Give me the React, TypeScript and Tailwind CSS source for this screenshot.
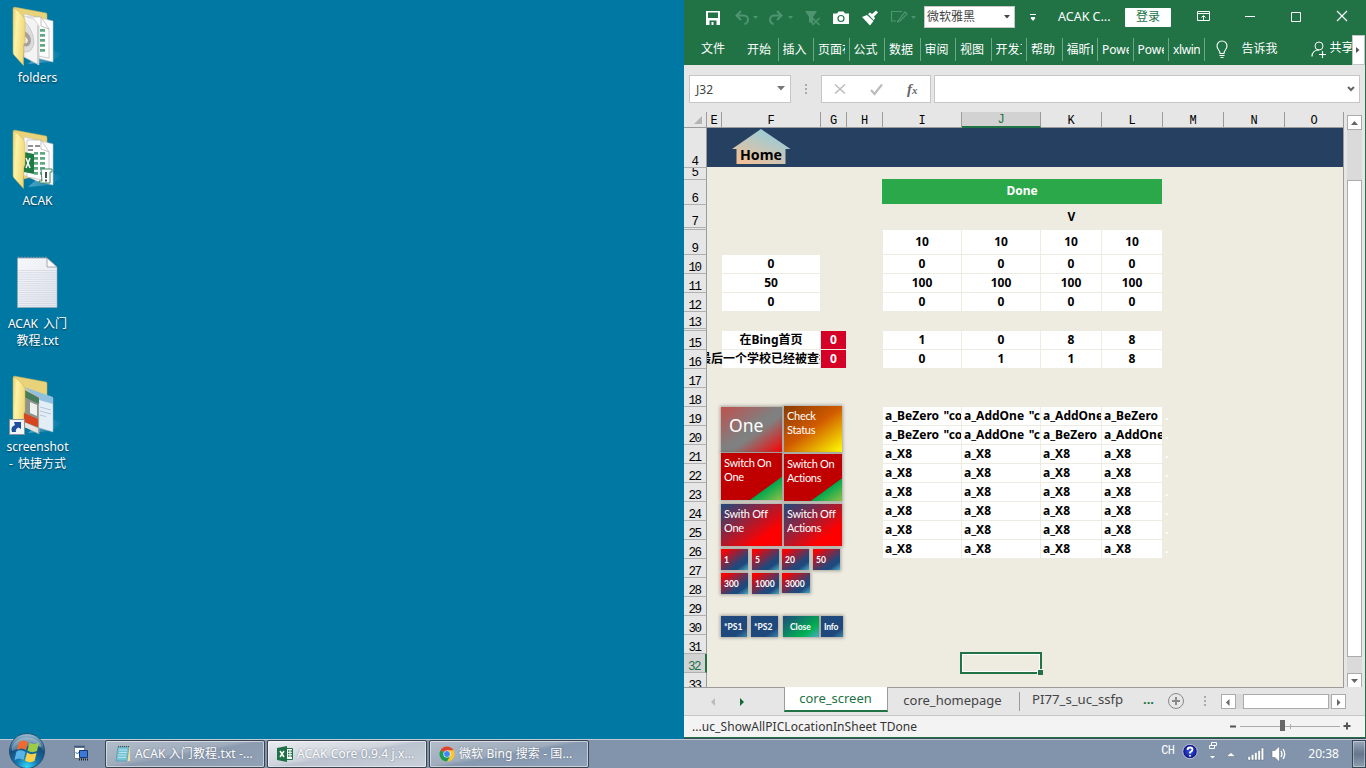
import type { ReactNode } from 'react';

const UI = "font-['Noto_Sans','Noto_Sans_CJK_SC',sans-serif]";

/* ---------- desktop ---------- */

function FolderIcon({ kind }: { kind: 'disc' | 'excel' | 'shot' }) {
  return (
    <svg width="64" height="67" viewBox="0 0 64 67">
      <defs>
        <linearGradient id={`ff-${kind}`} x1="0" y1="0" x2="1" y2="0.3">
          <stop offset="0" stopColor="#e9cd68" />
          <stop offset="0.35" stopColor="#fdf3a8" />
          <stop offset="1" stopColor="#f0d878" />
        </linearGradient>
        <linearGradient id={`fs-${kind}`} x1="0" y1="0" x2="1" y2="0">
          <stop offset="0" stopColor="#bfe2f2" stopOpacity="0.6" />
          <stop offset="1" stopColor="#bfe2f2" stopOpacity="0" />
        </linearGradient>
      </defs>
      <path d="M46 48 L63 54 L50 62 L28 64 Z" fill={`url(#fs-${kind})`} opacity=".7" />
      <path d="M14 7 L46 13 Q47 13 47 15 V50 L24 56 Z" fill="#e8d27a" stroke="#c9b25a" strokeWidth=".5" />
      {kind === 'shot' ? (
        <>
          <path d="M24 22 L53 29 V63 L36 58 Z" fill="#e3edf6" stroke="#9fb2c0" strokeWidth=".5" />
          <path d="M24 18 L53 28 V35 L39 31 Z" fill="#8fc0dd" />
          <path d="M40 38 L51 41 M40 42 L51 45 M40 46 L46 47.500" stroke="#b3c6d6" />
          <path d="M24 20 L39 28 V65 L24 57 Z" fill="#8c948c" stroke="#d4d4d4" strokeWidth=".5" />
          <path d="M24 21 L39 29 V35 L24 28 Z" fill="#477d5b" />
          <path d="M30 33 L37 36 V47 L30 44 Z" fill="#eef0ee" />
          <path d="M24 44 L38 50 V58 L24 53 Z" fill="#d54620" />
          <path d="M24 53 L38 59 V64 L24 58 Z" fill="#e5e2df" />
        </>
      ) : (
        <>
          <path d="M24 14 L53 21 V62 L37 58 L24 52 Z" fill="#fbfbfb" stroke="#c5c5c5" strokeWidth=".6" />
          <path d="M27 17 L41 17 L49 29 V58 L27 54 Z" fill="#fff" stroke="#a9a9a9" strokeWidth=".6" />
          <path d="M41 17 V26 L49 29" fill="none" stroke="#9a9a9a" strokeWidth=".6" />
          <path
            d="M40 29h5v2.800h-5zM40 34h5v2.800h-5zM40 39h5v2.800h-5zM40 44h5v2.800h-5zM40 49h5v2.800h-5zM34 29h4v2.800h-4zM34 34h4v2.800h-4zM34 39h4v2.800h-4zM34 44h4v2.800h-4zM34 49h4v2.800h-4z"
            fill="#5faa83"
          />
        </>
      )}
      {kind === 'disc' && (
        <>
          <path d="M24 16 L34 19 L39 26 V65 L24 57 Z" fill="#f3f3f3" stroke="#bdbdbd" strokeWidth=".6" />
          <path d="M24 21 Q33 29 34 42 Q33 53 24 52 Z" fill="#dcdcdc" stroke="#b5b5b5" strokeWidth=".6" />
          <path d="M24 31 Q31 34 31 41 Q30 48 24 46 Z" fill="#a8a19b" />
          <path d="M24 36 Q28 38 28 41 Q27 44 24 43 Z" fill="#e9e9e9" />
          <path d="M37 25 L39 26 V65 L37 64 Z" fill="#cfcfcf" />
        </>
      )}
      {kind === 'excel' && (
        <>
          <path d="M28 22h5v2h-5zM35 22h5v2h-5zM28 26h5v2h-5z" fill="#8e9291" />
          <path d="M24 29 L34 31 V51 L24 49 Z" fill="#1e7a45" />
          <path d="M26 35 L30 45 M30 35 L26 45" stroke="#fff" strokeWidth="1.500" />
          <path d="M41 46 H52 V49 H50 V60 H40 L39 58 H42 Z" fill="#fff" stroke="#3f8a63" strokeWidth="1" />
          <path d="M46 49 V55 M46 56.500 V58.500" stroke="#2f3f38" strokeWidth="1.800" />
        </>
      )}
      <path d="M13.500 7.500 Q23 14 25 20 V42 L23.500 45 V65.500 L14 55 Q13 54 13 52 V9 Z" fill={`url(#ff-${kind})`} stroke="#cfb557" strokeWidth=".5" />
      {kind === 'shot' && (
        <g>
          <rect x="9.500" y="50.500" width="15" height="15" fill="#f2f4f6" stroke="#8b949c" />
          <path d="M12 63 Q10 58 15 56 L14 53 L21 53 L21 60 L18.500 58.500 Q15 60 16 63 Z" fill="#1d4f9c" />
        </g>
      )}
    </svg>
  );
}

function NoteIcon() {
  return (
    <svg width="64" height="64" viewBox="0 0 64 64">
      <defs>
        <linearGradient id="note" x1="0" y1="0" x2="1" y2="1">
          <stop offset="0" stopColor="#f6f7fa" />
          <stop offset="1" stopColor="#e3e6f0" />
        </linearGradient>
      </defs>
      <path d="M17.500 12 H47 L57 21 V61.500 H17.500 Z" fill="url(#note)" stroke="#9ba5af" strokeWidth=".6" />
      {Array.from({ length: 17 }, (_, i) => (
        <path key={i} d={`M18 ${24.5 + i * 2.2} H56.500`} stroke="#c9ced8" strokeWidth=".6" />
      ))}
      <path d="M18 11.500 H47" stroke="#8796a3" strokeWidth="1.500" strokeDasharray="1.500 1.500" />
      <path d="M47 12 V21 H57 Z" fill="#fafafa" stroke="#8f969e" strokeWidth=".8" />
    </svg>
  );
}

function DesktopItem({ icon, label }: { icon: ReactNode; label: string[] }) {
  return (
    <div className="flex h-[123px] w-[75px] flex-col">
      <div className="flex h-[69px] items-start">{icon}</div>
      <div className="flex flex-col items-center text-[12px] leading-[17px] text-white [text-shadow:0_1px_2px_rgba(0,0,0,.55)]">
        {label.map((l) => (
          <span key={l} className="whitespace-pre [word-spacing:2px]">{l}</span>
        ))}
      </div>
    </div>
  );
}

/* ---------- title bar ---------- */

function QuickIcons() {
  return (
    <svg width="224" height="34" viewBox="0 0 224 34" className="shrink-0" fill="none">
      <path d="M6 11h14v14H6z" fill="#fff" />
      <path d="M8 12.500h10v5.500H8zM9.500 20.500h7v4.500H9.500z" fill="#217346" />
      <path d="M11.500 22h2v3h-2z" fill="#fff" />
      <g stroke="#4f9470" strokeWidth="2">
        <path d="M41 11 L36.500 15.500 L41 20 M37 15.500 H44 Q48 16 48 20 Q48 23 44.500 24" />
        <path d="M77 11 L81.500 15.500 L77 20 M81 15.500 H74 Q70 16 70 20 Q70 23 73.500 24" />
      </g>
      <path d="M53 16h5l-2.500 3zM88 16h5l-2.500 3z" fill="#4f9470" />
      <path d="M105 11h12l-4 6v7l-4-2v-5z" fill="#4f9470" />
      <path d="M112.500 18l7 7M119.500 18l-7 7" stroke="#4f9470" strokeWidth="1.500" />
      <path d="M133 13.500h4l1.500-2h5l1.500 2h4V24h-16z" fill="#fff" />
      <circle cx="141" cy="18.500" r="3" stroke="#217346" strokeWidth="1.200" />
      <path d="M162 17l5-2 6.500 6-3.500 4.500zM168 14l2-1.500 2 1.500 4-3.500 2 2-4 4 1 2-1.500 1.500z" fill="#fff" />
      <path d="M202 11.500H191.500v9.500H196M198 21L205 12l2 2-7 7-3 1z" stroke="#4f9470" strokeWidth="1.200" />
      <path d="M211 16h5l-2.500 3z" fill="#4f9470" />
    </svg>
  );
}

function TitleBar() {
  return (
    <div className="flex h-[34px] items-center text-[12px] text-white">
      <div className="flex w-[240px] pl-4"><QuickIcons /></div>
      <div className="flex h-[22px] w-[91px] items-center justify-between border border-[#c6c6c6] bg-white pl-[2px] pr-[4px] text-[#444]">
        <span>微软雅黑</span>
        <svg width="6" height="4"><path d="M0 0h6L3 3.500z" fill="#444" /></svg>
      </div>
      <svg width="8" height="10" className="ml-[14px]"><path d="M1 2.500h6M2 5.500h4" stroke="#fff" /><path d="M1.500 6h5L4 9z" fill="#fff" /></svg>
      <span className="ml-[21px] w-[67px] text-[12.500px]">ACAK C...</span>
      <div className="flex h-[19px] w-[46px] items-center justify-center rounded-[1px] bg-white text-[#217346]">登录</div>
      <svg width="195" height="34" viewBox="0 0 195 34" fill="none" stroke="#fff">
        <path d="M26.500 11.500h12v9h-12zM26.500 13.500h12M32.500 20v-4M30.500 17.500l2-2 2 2" />
        <path d="M74 16.500h10M120.500 12.500h9v9h-9z" />
        <path d="M166 11l10 10M176 11l-10 10" strokeWidth="1.200" />
      </svg>
    </div>
  );
}

const ribbonTabs = ['开始', '插入', '页面布', '公式', '数据', '审阅', '视图', '开发工', '帮助', '福昕P', 'Power', 'Power', 'xlwin'];

function Ribbon() {
  return (
    <div className="flex h-[31px] items-start text-[12px] text-white">
      <div className="flex h-[30px] w-[59px] items-center pl-[17px]">文件</div>
      {ribbonTabs.map((t, i) => (
        <div key={i} className="mt-[4px] flex h-[23px] w-[35.500px] shrink-0 items-center border-r border-[#6fa587] pl-[4px] pr-[4px]">
          <span className={`overflow-hidden whitespace-nowrap ${t === 'xlwin' ? 'tracking-[-0.400px]' : ''}`}>{t}</span>
        </div>
      ))}
      <svg width="36" height="30" viewBox="0 0 36 30" fill="none" stroke="#fff">
        <path d="M15 19.500C15 16 12 15.500 12 12a5 5 0 0 1 10 0C22 15.500 19 16 19 19.500zM14.500 21.500h5M15.500 23.500h3" strokeWidth="1.100" />
      </svg>
      <div className="flex h-[30px] w-[69px] items-center pl-px">告诉我</div>
      <svg width="20" height="30" viewBox="0 0 20 30" fill="none" stroke="#fff">
        <circle cx="9" cy="12" r="4" /><path d="M2 22.500c0-4 3-6.500 7-6.500M9 20.500h7M12.500 17v7" strokeWidth="1.200" />
      </svg>
      <div className="flex h-[28px] w-[22px] items-center overflow-hidden whitespace-nowrap">共享</div>
      <div className="mt-px flex h-[30px] w-[13px] shrink-0 items-center justify-center border border-[#c6c6c6] bg-white">
        <svg width="4" height="6"><path d="M0 0l3.500 3L0 6z" fill="#555" /></svg>
      </div>
    </div>
  );
}

function Dots({ c }: { c: string }) {
  return (
    <div className={`flex flex-col items-center justify-center gap-[2px] ${c}`}>
      <i className="size-[2px] bg-[#aaa]" />
      <i className="size-[2px] bg-[#aaa]" />
      <i className="size-[2px] bg-[#aaa]" />
    </div>
  );
}

function FormulaBar() {
  return (
    <div className="flex h-[47px] items-start bg-[#e6e6e6] pl-[5px] pt-[10px] text-[12px] text-[#444]">
      <div className="flex h-[28px] w-[102px] items-center justify-between border border-[#c6c6c6] bg-white pl-[6px] pr-[5px]">
        <span className="pt-px">J32</span>
        <svg width="8" height="6"><path d="M0 0h8L4 4.500z" fill="#777" /></svg>
      </div>
      <Dots c="h-[28px] w-[30px]" />
      <div className="flex h-[28px] w-[110px] items-center border border-[#c6c6c6] bg-white">
        <svg width="78" height="26" viewBox="0 0 78 26" fill="none" stroke="#bcbcbc" strokeWidth="1.600">
          <path d="M13 8.500l10 9M23 8.500l-10 9" /><path d="M49 14l3.500 4L60 8.500" strokeWidth="2.200" />
        </svg>
        <span className="ml-[7px] font-['Liberation_Serif',serif] text-[15px] font-bold italic leading-none text-[#666]">f<span className="text-[11px]">x</span></span>
      </div>
      <div className="ml-[3px] flex h-[28px] w-[426px] items-center justify-end border border-[#c6c6c6] bg-white pr-[4px]">
        <svg width="8" height="6" fill="none" stroke="#666" strokeWidth="2"><path d="M1 1l3 3 3-3" /></svg>
      </div>
    </div>
  );
}

/* ---------- sheet ---------- */

const columns: [string, string][] = [
  ['E', 'w-[15px]'], ['F', 'w-[99px]'], ['G', 'w-[26px]'], ['H', 'w-[36px]'], ['I', 'w-[79px]'], ['J', 'w-[79px]'],
  ['K', 'w-[61px]'], ['L', 'w-[61px]'], ['M', 'w-[61px]'], ['N', 'w-[61px]'], ['O', 'w-[59px]'],
];

function ColumnHeaders() {
  return (
    <div className="flex h-[16px] bg-[#e6e6e6] font-['Liberation_Mono',monospace] text-[12px] text-black">
      <div className="flex w-[23px] items-end justify-end border-b border-r border-[#9b9b9b] pb-[3px] pr-[4px]">
        <svg width="8" height="8"><path d="M8 0v8H0z" fill="#b4b4b4" /></svg>
      </div>
      {columns.map(([c, w]) => (
        <div
          key={c}
          className={`${w} flex items-end justify-center border-r leading-[11px] ${
            c === 'J' ? 'border-b-2 border-b-[#217346] border-r-[#9b9b9b] bg-[#d2d2d2] text-[#217346]' : 'border-b border-[#9b9b9b]'
          }`}
        >
          {c}
        </div>
      ))}
    </div>
  );
}

type RowSpec = { n: string; h: string; f?: string; g?: string; v?: string[]; left?: boolean };
const X8 = ['a_X8', 'a_X8', 'a_X8', 'a_X8'];
const rows: RowSpec[] = [
  { n: '4', h: 'h-[40px]' },
  { n: '5', h: 'h-[12px]' },
  { n: '6', h: 'h-[25px]' },
  { n: '7', h: 'h-[23px]' },
  { n: '', h: 'h-[2px]' },
  { n: '9', h: 'h-[25px]', v: ['10', '10', '10', '10'] },
  { n: '10', h: 'h-[19px]', f: '0', v: ['0', '0', '0', '0'] },
  { n: '11', h: 'h-[19px]', f: '50', v: ['100', '100', '100', '100'] },
  { n: '12', h: 'h-[19px]', f: '0', v: ['0', '0', '0', '0'] },
  { n: '13', h: 'h-[17px]' },
  { n: '', h: 'h-[2px]' },
  { n: '15', h: 'h-[19px]', f: '在Bing首页', g: '0', v: ['1', '0', '8', '8'] },
  { n: '16', h: 'h-[19px]', f: '最后一个学校已经被查找过', g: '0', v: ['0', '1', '1', '8'] },
  { n: '17', h: 'h-[19px]' },
  { n: '18', h: 'h-[19px]' },
  { n: '19', h: 'h-[19px]', left: true, v: ['a_BeZero "co', 'a_AddOne "c', 'a_AddOne', 'a_BeZero'] },
  { n: '20', h: 'h-[19px]', left: true, v: ['a_BeZero "co', 'a_AddOne "c', 'a_BeZero', 'a_AddOne'] },
  { n: '21', h: 'h-[19px]', left: true, v: X8 },
  { n: '22', h: 'h-[19px]', left: true, v: X8 },
  { n: '23', h: 'h-[19px]', left: true, v: X8 },
  { n: '24', h: 'h-[19px]', left: true, v: X8 },
  { n: '25', h: 'h-[19px]', left: true, v: X8 },
  { n: '26', h: 'h-[19px]', left: true, v: X8 },
  { n: '27', h: 'h-[19px]' },
  { n: '28', h: 'h-[19px]' },
  { n: '29', h: 'h-[19px]' },
  { n: '30', h: 'h-[19px]' },
  { n: '31', h: 'h-[19px]' },
  { n: '32', h: 'h-[19px]' },
  { n: '33', h: 'h-[19px]' },
];

const valueWidths = ['w-[79px]', 'w-[79px]', 'w-[61px]', 'w-[61px]'];

function Row({ n, h, f, g, v, left }: RowSpec) {
  const cell = 'flex shrink-0 items-center overflow-hidden border-b border-r border-[#eeece0] whitespace-nowrap';
  return (
    <div className={`${h} flex shrink-0`}>
      <div
        className={`flex w-[23px] shrink-0 items-end justify-center overflow-hidden border-b border-b-[#b0b0b0] pr-px font-['Liberation_Mono',monospace] text-[12.500px] font-normal tracking-[-1.500px] ${
          n === '5' ? 'leading-[11px]' : 'leading-[10px]'
        } ${
          n === '32' ? 'border-r-2 border-r-[#217346] bg-[#d2d2d2] text-[#217346]' : 'border-r border-r-[#9b9b9b] bg-[#e6e6e6] text-black'
        }`}
      >
        {n}
      </div>
      {n === '4' ? (
        <div className="mb-px w-[636px] bg-[#254061]" />
      ) : n === '6' ? (
        <div className="-mt-px mb-px ml-[175px] flex w-[280px] items-center justify-center bg-[#2ba84a] pb-[2px] text-white">Done</div>
      ) : n === '7' ? (
        <div className="ml-[334px] flex w-[61px] items-center justify-center">V</div>
      ) : (
        <>
          <div className="w-[15px] shrink-0" />
          <div className={`${cell} justify-center ${n === '16' ? '-ml-[15px] w-[114px] bg-linear-to-r from-[#eeece0] from-[15px] to-white to-[15px] pl-[15px]' : f ? 'w-[99px] bg-white' : 'w-[99px]'}`}>
            {f}
          </div>
          <div className={`${cell} w-[26px] justify-center text-white ${g ? 'bg-[#d50025]' : ''}`}>{g}</div>
          <div className="w-[36px] shrink-0" />
          {v?.map((t, i) => (
            <div key={i} className={`${cell} ${valueWidths[i]} bg-white ${left ? 'pl-[2px] [word-spacing:1.500px]' : 'justify-center'}`}>{t}</div>
          ))}
          {left && <div className="w-[61px] pl-[2px] text-white">.</div>}
        </>
      )}
    </div>
  );
}

type Btn = { t: string; c: string };
const onBg = 'bg-linear-[144deg,#c00000_0%,#c00000_74%,#00a84f_75%,#92c046_100%]';
const offBg = 'bg-linear-[144deg,#1f497d_0%,#ff0000_75%,#ff0000_100%]';
const numBg = 'bg-linear-[144deg,#ff0000_0%,#ff0000_8%,#1f497d_68%,#1f497d_78%,#4bacc6_100%]';
const psBg = 'bg-linear-[144deg,#1f497d_0%,#1f497d_75%,#3a86a8_100%]';
const big = "font-['Lato',sans-serif] text-[11px] leading-[14px] tracking-[-0.300px] pl-[3px] pt-[3px]";
const small = "font-['Lato',sans-serif] text-[8.500px] leading-[22px] pl-[3px] font-bold";
const buttons: Btn[] = [
  { t: 'One', c: 'left-[14px] top-[279px] w-[61px] h-[45px] text-[17.500px] leading-[36px] pl-[8px] bg-linear-[144deg,#c0504d_0%,#808080_48%,#808080_58%,#ff0000_100%]' },
  { t: 'Check\nStatus', c: `left-[77px] top-[278px] w-[58px] h-[46px] ${big} bg-linear-[144deg,#8a3c00_0%,#d05a00_48%,#ffff00_100%]` },
  { t: 'Switch On\nOne', c: `left-[14px] top-[325px] w-[61px] h-[47px] ${big} ${onBg}` },
  { t: 'Switch On\nActions', c: `left-[77px] top-[326px] w-[58px] h-[47px] ${big} ${onBg}` },
  { t: 'Swith Off\nOne', c: `left-[14px] top-[376px] w-[61px] h-[42px] ${big} ${offBg}` },
  { t: 'Switch Off\nActions', c: `left-[77px] top-[376px] w-[58px] h-[42px] ${big} ${offBg}` },
  { t: '1', c: `left-[14px] top-[421px] w-[27px] h-[21px] ${small} ${numBg}` },
  { t: '5', c: `left-[45px] top-[421px] w-[27px] h-[21px] ${small} ${numBg}` },
  { t: '20', c: `left-[75px] top-[421px] w-[27px] h-[21px] ${small} ${numBg}` },
  { t: '50', c: `left-[106px] top-[421px] w-[27px] h-[21px] ${small} ${numBg}` },
  { t: '300', c: `left-[14px] top-[445px] w-[27px] h-[21px] ${small} ${numBg}` },
  { t: '1000', c: `left-[45px] top-[445px] w-[27px] h-[21px] ${small} ${numBg}` },
  { t: '3000', c: `left-[75px] top-[445px] w-[28px] h-[20px] ${small} ${numBg}` },
  { t: '*PS1', c: `left-[14px] top-[488px] w-[26px] h-[21px] ${small} ${psBg}` },
  { t: '*PS2', c: `left-[44px] top-[488px] w-[27px] h-[21px] ${small} ${psBg}` },
  { t: 'Close', c: `left-[76px] top-[488px] w-[36px] h-[21px] ${small} indent-[4px] bg-linear-[144deg,#1f497d_0%,#00b050_70%,#4bacc6_100%]` },
  { t: 'Info', c: `left-[114px] top-[488px] w-[22px] h-[21px] ${small} tracking-[-0.200px] ${psBg}` },
];

function Sheet() {
  return (
    <div className="relative flex h-[559px] w-[660px] flex-col overflow-hidden border-r border-[#9b9b9b] bg-[#eeece0] text-[12px] font-bold text-black">
      {rows.map((r, i) => (
        <Row key={i} {...r} />
      ))}
      <div className="absolute left-[23px] top-0 font-normal">
        <svg width="60" height="37" viewBox="0 0 60 37" className="absolute left-[25px] top-px">
          <defs>
            <linearGradient id="home" x1="0" y1="1" x2=".7" y2="0">
              <stop offset="0" stopColor="#fbbf91" /><stop offset="1" stopColor="#93cddd" />
            </linearGradient>
          </defs>
          <path d="M29 0 L58.500 20 H53.500 V35 H4.500 V20 H0 Z" fill="url(#home)" />
        </svg>
        <span className="absolute left-[33px] top-[16px] text-[14.200px] font-bold leading-[21px]">Home</span>
        {buttons.map((b) => (
          <button
            key={b.t}
            className={`absolute whitespace-pre text-left align-top text-white shadow-[0_0_3px_1px_rgba(90,90,90,.5)] ${b.c}`}
          >
            <span className="flex h-full items-start">{b.t}</span>
          </button>
        ))}
        <div className="absolute left-[253px] top-[524px] h-[22px] w-[82px] border-2 border-[#217346] shadow-[inset_0_0_0_1px_#fff]">
          <i className="absolute -bottom-[3px] -right-[3px] size-[6px] border-l border-t border-white bg-[#217346]" />
        </div>
      </div>
    </div>
  );
}

function ScrollButton({ d }: { d: string }) {
  return (
    <div className="flex size-[15px] shrink-0 items-center justify-center border border-[#ababab] bg-white">
      <svg width="9" height="8" viewBox="0 0 9 8"><path d={d} fill="#666" /></svg>
    </div>
  );
}

function SheetTabs() {
  return (
    <div className="flex h-[29px] border-b border-[#c6c6c6] bg-[#e6e6e6] text-[13px] text-[#444]">
      <div className="flex w-[100px] items-center gap-[24px] border-t border-[#9b9b9b] pl-[27px]">
        <svg width="5" height="8"><path d="M4 0v8L0 4z" fill="#bbb" /></svg>
        <svg width="5" height="8"><path d="M0 0v8l4-4z" fill="#0f6b38" /></svg>
      </div>
      <div className="flex h-[25px] w-[104px] items-center justify-center border-x border-b-2 border-x-[#9b9b9b] border-b-[#217346] bg-white pr-px pt-px text-[#217346]">core_screen</div>
      <div className="flex w-[456px] items-start border-t border-[#9b9b9b]">
        <div className="mt-[4px] flex h-[19px] w-[132px] items-center justify-center border-r border-[#9b9b9b] pb-[3px] pr-[2px] leading-none">core_homepage</div>
        <div className="flex h-[24px] w-[117px] items-center pl-[12px] text-[13.200px]">PI77_s_uc_ssfp</div>
        <div className="w-[30px] pl-[6px] pt-[2px] font-bold text-[#217346]">...</div>
        <svg width="18" height="26" viewBox="0 0 18 26" fill="none" stroke="#8a8a8a">
          <circle cx="9" cy="13" r="7.500" /><path d="M9 9v8M5 13h8" strokeWidth="2" />
        </svg>
        <Dots c="h-[26px] w-[40px]" />
        <div className="-ml-[4px] -mr-[30px] mt-[6px] flex h-[15px] w-[125px] shrink-0 bg-[#dadada]">
          <ScrollButton d="M5.500 1v7L2 4.500z" />
          <div className="ml-[7px] mr-[2px] h-[15px] w-[86px] border border-[#ababab] bg-white" />
          <ScrollButton d="M3 1v7L6.500 4.500z" />
        </div>
      </div>
    </div>
  );
}

function StatusBar() {
  return (
    <div className="flex h-[21px] items-center justify-between bg-[#f3f3f3] pl-[8px] text-[12px] text-[#333]">
      <span className="leading-[20px] tracking-[0.060px]">...uc_ShowAllPICLocationInSheet TDone</span>
      <svg width="140" height="21" viewBox="0 0 140 21">
        <path d="M5 10.500h6M118.500 10h7M122 6.500v7" stroke="#555" strokeWidth="2" />
        <path d="M15 10.500h100M65.500 8v5" stroke="#aaa" />
        <path d="M55 4h5v11h-5z" fill="#666" />
      </svg>
    </div>
  );
}

function ExcelWindow() {
  return (
    <div className="flex w-[682px] shrink-0 flex-col border-b border-[#3c4b57] bg-[#e6e6e6]">
      <div className="h-[65px] bg-[#217346]">
        <TitleBar />
        <Ribbon />
      </div>
      <div className="flex grow flex-col border-b border-r border-[#217346]">
        <FormulaBar />
        <div className="flex">
          <div className="flex w-[660px] flex-col">
            <ColumnHeaders />
            <Sheet />
          </div>
          <div className="flex w-[21px] flex-col pl-[3px] pt-[3px]">
            <ScrollButton d="M1 6h7L4.500 2z" />
            <div className="h-[543px] w-[15px] bg-[#dadada] pt-[50px]">
              <div className="h-[477px] border border-[#ababab] bg-white" />
            </div>
            <div className="-mb-[2px]"><ScrollButton d="M1 2h7L4.500 6z" /></div>
          </div>
        </div>
        <SheetTabs />
        <StatusBar />
      </div>
    </div>
  );
}

/* ---------- taskbar ---------- */

function StartOrb() {
  return (
    <svg width="38" height="38" viewBox="0 0 38 38" className="absolute -top-[8px] left-[8px]">
      <defs>
        <radialGradient id="orb" cx=".5" cy=".95" r=".9">
          <stop offset="0" stopColor="#35d5fa" /><stop offset=".35" stopColor="#1478ae" />
          <stop offset=".7" stopColor="#174d7b" /><stop offset="1" stopColor="#8fb4cc" />
        </radialGradient>
      </defs>
      <circle cx="19" cy="19" r="17.500" fill="url(#orb)" stroke="#254f70" />
      <path d="M4 15a15.500 13 0 0 1 30 0q-15-3-30 4z" fill="#fff" opacity=".3" />
      <path d="M11 10q4-3 9 0l-2 8q-4-3-9 0z" fill="#ed6a30" />
      <path d="M21.500 10.500q4 3 9.500 0l-2 8.500q-5 2.500-9.500-.5z" fill="#9ccb48" />
      <path d="M8.500 19.500q4.500-2.500 9 .5l-2 8q-4-3-9 0z" fill="#5bb4e8" />
      <path d="M19 20.500q4 3 9.500.5l-2 8q-5 2.500-9.500-.5z" fill="#fcd145" />
    </svg>
  );
}

function TaskButton({ icon, label, bg, w }: { icon: ReactNode; label: string; bg: string; w: string }) {
  return (
    <div className={`${w} ${bg} flex h-[28px] shrink-0 items-center gap-[4px] rounded-[2px] border border-[#39444f] pl-[9px] text-[12px] text-white shadow-[inset_0_0_0_1px_rgba(255,255,255,.5)] [text-shadow:0_0_2px_rgba(60,70,90,.6)]`}>
      {icon}
      <span className="whitespace-nowrap tracking-[0.100px]">{label}</span>
    </div>
  );
}

function Taskbar() {
  return (
    <div className="relative flex h-[29px] border-t border-[#c1cad6] bg-[#8294ab]">
      <StartOrb />
      <svg width="105" height="28" viewBox="0 0 105 28" className="shrink-0">
        <path d="M74.500 7.500h10v11h-10z" fill="#fff" stroke="#6f7c8b" />
        <path d="M74 6.500h11" stroke="#3e5878" strokeWidth="1.500" />
        <path d="M75.500 12l2 2 3-4" fill="none" stroke="#2c6faa" />
        <path d="M79.500 10.500h8v7h-8z" fill="#3d79d4" stroke="#123a7a" />
        <path d="M79 19.500h10" stroke="#222" strokeWidth="2" strokeDasharray="1 1" />
      </svg>
      <TaskButton
        w="mr-[2px] w-[160px]"
        bg="bg-linear-[170deg,#b3bdca_0%,#a0adbd_45%,#8c9bb0_52%,#91a1b6_100%]"
        label="ACAK 入门教程.txt -..."
        icon={
          <svg width="16" height="18" viewBox="0 0 16 18">
            <path d="M3 2h12v14H3z" fill="#f0dfa0" /><path d="M3 2h11l-2 14H1z" fill="#77c3d6" stroke="#4c8ea1" strokeWidth=".6" />
            <path d="M4 5h8M4 7.500h8M3 10h8M3 12.500h8" stroke="#b9e3ec" /><path d="M3 1.500h11" stroke="#3f4a50" strokeDasharray="1 1" />
          </svg>
        }
      />
      <TaskButton
        w="mr-[2px] w-[160px]"
        bg="bg-linear-[170deg,#e9ecf0_0%,#d0d5dd_45%,#bac3cf_52%,#c9d0d9_100%]"
        label="ACAK Core 0.9.4 j.x..."
        icon={
          <svg width="16" height="18" viewBox="0 0 16 18">
            <path d="M9.500 3.500h6v11h-6z" fill="#fff" stroke="#217346" /><path d="M11 6h1.500M13.500 6H15M11 8.500h1.500M13.500 8.500H15M11 11h1.500M13.500 11H15" stroke="#217346" strokeWidth="1.500" />
            <path d="M0 3l10-2v16L0 15z" fill="#1e7145" /><path d="M3 6l4 6M7 6l-4 6" stroke="#fff" strokeWidth="1.500" />
          </svg>
        }
      />
      <TaskButton
        w="w-[160px]"
        bg="bg-linear-[170deg,#b3bdca_0%,#a0adbd_45%,#8799b0_52%,#8fa1b8_100%]"
        label="微软 Bing 搜索 - 国..."
        icon={
          <svg width="16" height="16" viewBox="0 0 16 16">
            <circle cx="8" cy="8" r="7.500" fill="#fbc72f" />
            <path d="M8 8L1.500 4.200A7.500 7.500 0 0 1 14.500 4.200H8z" fill="#dc4437" />
            <path d="M8 8L1.500 4.200A7.500 7.500 0 0 0 8 15.500L11.200 10z" fill="#1a9c58" />
            <circle cx="8" cy="8" r="3.600" fill="#fff" /><circle cx="8" cy="8" r="2.900" fill="#4285f4" />
          </svg>
        }
      />
      <div className="ml-auto flex items-start text-white">
        <span className="pt-[3px] font-['Liberation_Mono',monospace] text-[12px] leading-[17px] tracking-[-0.700px]">CH</span>
        <svg width="140" height="28" viewBox="0 0 140 28" fill="none">
          <defs><radialGradient id="help"><stop offset="0" stopColor="#3b5cf0" /><stop offset="1" stopColor="#0a0f80" /></radialGradient></defs>
          <circle cx="16" cy="11.500" r="7.200" fill="url(#help)" stroke="#cfd5df" strokeWidth=".8" />
          <path d="M13.500 10q0-2.500 2.500-2.500t2.500 2q0 1.500-2.500 3v1M16 15v1.500" stroke="#fff" strokeWidth="1.800" />
          <path d="M37.500 2.500h5v3h-5zM35.500 5.500h5v3h-5z" stroke="#fff" fill="#8294ab" />
          <path d="M36 16h5l-2.500 2.500z" fill="#fff" />
          <path d="M52.500 16.500l4.500-4 4.500 4z" fill="#fff" stroke="#5d6c80" strokeWidth=".5" />
          <path d="M74 16.500h2.500v3.500H74zM77.300 14.500h2.500V20h-2.500zM80.600 12.500h2.500V20h-2.500zM83.900 10.500h2.500V20h-2.500zM87.200 8h2.500v12h-2.500z" fill="#fff" stroke="#57667a" strokeWidth=".4" />
          <path d="M98 10.500h3l4.500-4.500v16l-4.500-4.500h-3z" fill="#fff" stroke="#596577" strokeWidth=".5" />
          <path d="M107 11q2 3 0 6M109 9q3.500 5 0 10" stroke="#fff" strokeWidth="1.300" />
        </svg>
        <span className="-ml-[6px] mr-[13px] pt-[5px] text-[12px] leading-[18px]">20:38</span>
        <div className="h-[28px] w-[14px] border border-[#3b4654] bg-linear-to-b from-[#9aa9bb] via-[#65758a] to-[#8d9db2] shadow-[inset_0_0_0_1px_rgba(255,255,255,.35)]" />
      </div>
    </div>
  );
}

export default function App() {
  return (
    <div className={`${UI} flex h-[768px] w-[1366px] flex-col overflow-hidden bg-[#0078a4]`}>
      <div className="flex h-[739px] shrink-0">
        <div className="flex w-[684px] shrink-0 flex-col">
          <DesktopItem icon={<FolderIcon kind="disc" />} label={['folders']} />
          <DesktopItem icon={<FolderIcon kind="excel" />} label={['ACAK']} />
          <DesktopItem icon={<NoteIcon />} label={['ACAK 入门', '教程.txt']} />
          <DesktopItem icon={<FolderIcon kind="shot" />} label={['screenshot', '- 快捷方式']} />
        </div>
        <ExcelWindow />
      </div>
      <Taskbar />
    </div>
  );
}
